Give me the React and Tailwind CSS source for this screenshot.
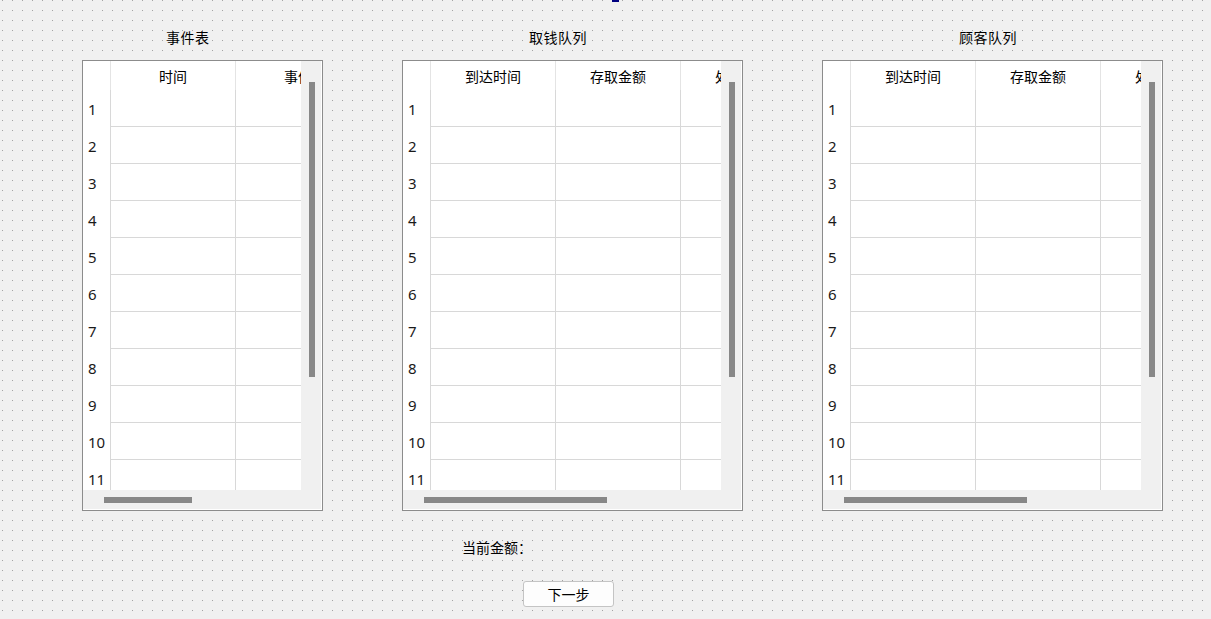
import React from "react";

const CJK = { fontFamily: '"Noto Sans CJK SC", "Noto Sans", sans-serif' };
const NUM = { fontFamily: '"Noto Sans", "Noto Sans CJK SC", sans-serif' };

function Table({ cols, contentW, hThumbW }) {
  const rows = Array.from({ length: 12 }, (_, i) => i + 1);
  return (
    <div className="border border-[#8c8c8c] bg-[#f0f0f0]">
      <div className="flex flex-col border-r border-b border-white">
        <div className="flex">
          <div
            className="h-[429px] overflow-hidden bg-white"
            style={{ width: contentW }}
          >
            <div className="flex h-[29px]">
              <div className="w-[27px] shrink-0" />
              {cols.map((c) => (
                <div
                  key={c}
                  className="flex w-[125px] shrink-0 items-center justify-center whitespace-nowrap border-l border-[#e4e4e4] pt-[1px] text-[14px] text-black"
                  style={CJK}
                >
                  {c}
                </div>
              ))}
            </div>
            {rows.map((r) => (
              <div key={r} className="flex h-[37px]">
                <div
                  className="flex w-[27px] shrink-0 items-center pl-[5px] pt-[1px] text-[15px] text-[#1a1a1a]"
                  style={NUM}
                >
                  {r}
                </div>
                {cols.map((c) => (
                  <div
                    key={c}
                    className="w-[125px] shrink-0 border-l border-b border-[#d8d8d8]"
                  />
                ))}
              </div>
            ))}
          </div>
          <div className="h-[429px] w-[20px] pl-[8px] pt-[21px]">
            <div className="h-[295px] w-[6px] bg-[#888888]" />
          </div>
        </div>
        <div className="h-[19px] pl-[21px] pt-[7px]">
          <div className="h-[6px] bg-[#888888]" style={{ width: hThumbW }} />
        </div>
      </div>
    </div>
  );
}

export default function App() {
  const q = ["到达时间", "存取金额", "处理时间"];
  return (
    <div
      className="relative h-[619px] w-[1211px] overflow-hidden bg-[#f0f0f0] bg-[radial-gradient(circle_at_2.5px_0.5px,#a3a3a3_0.7px,transparent_0.72px)] bg-[length:10px_10px]"
      style={CJK}
    >
      <div className="absolute left-[612px] top-0 h-[2px] w-[7px] bg-[#000080]" />
      <div className="flex gap-[79px] pl-[82px] pt-[27px]">
        <div className="flex w-[241px] flex-col">
          <div className="mb-[13px] h-[20px] pl-[84px] text-[14px] leading-[20px] tracking-[0.5px] text-black">
            事件表
          </div>
          <Table cols={["时间", "事件"]} contentW={218} hThumbW={88} />
        </div>
        <div className="flex w-[341px] flex-col">
          <div className="mb-[13px] h-[20px] pl-[127px] text-[14px] leading-[20px] tracking-[0.5px] text-black">
            取钱队列
          </div>
          <Table cols={q} contentW={318} hThumbW={183} />
        </div>
        <div className="flex w-[341px] flex-col">
          <div className="mb-[13px] h-[20px] pl-[137px] text-[14px] leading-[20px] tracking-[0.5px] text-black">
            顾客队列
          </div>
          <Table cols={q} contentW={318} hThumbW={183} />
        </div>
      </div>
      <div className="mt-[26px] h-[20px] pl-[462px] text-[14px] leading-[20px] text-black">
        当前金额：
      </div>
      <div className="mt-[24px] pl-[523px]">
        <button className="flex h-[26px] w-[91px] items-center justify-center rounded-[3px] border border-[#c4c4c4] bg-[#fdfdfd] text-[14px] text-black">
          下一步
        </button>
      </div>
    </div>
  );
}
